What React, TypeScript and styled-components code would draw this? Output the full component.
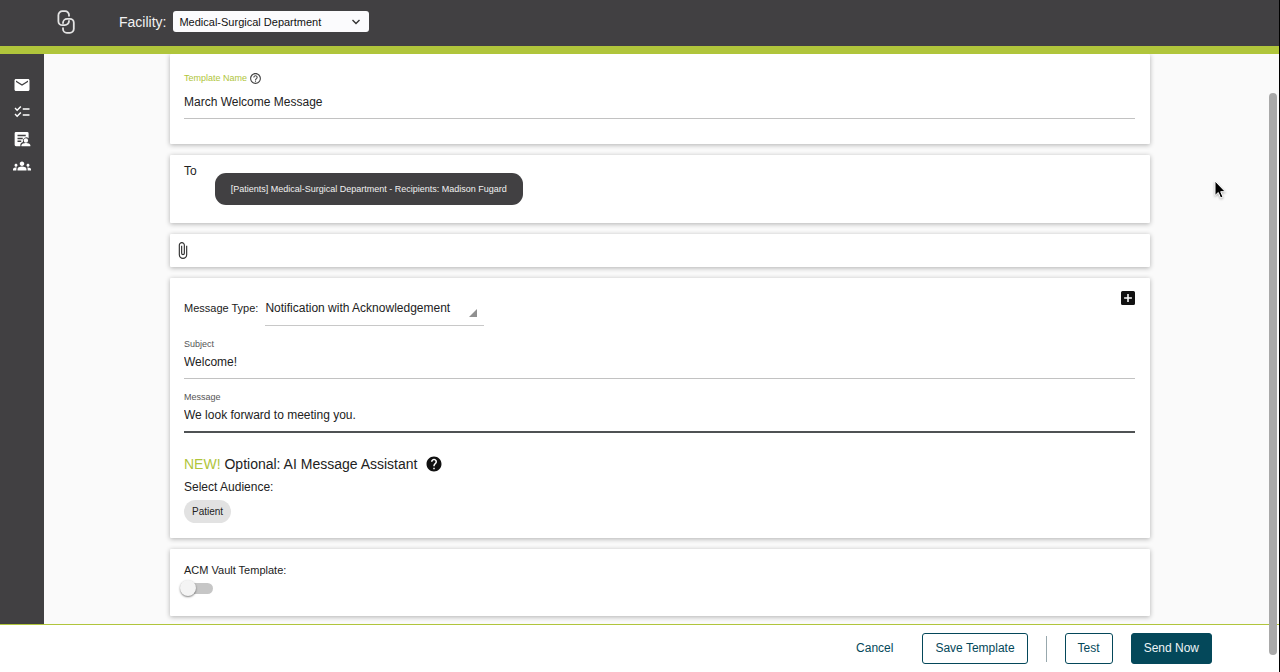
import React from "react";
import styled, { createGlobalStyle } from "styled-components";
import { MdEmail, MdChecklist, MdGroups, MdHelp, MdHelpOutline } from "react-icons/md";

const GlobalStyle = createGlobalStyle`
  * { box-sizing: border-box; }
  body { margin: 0; background: #fafafa; }
  body, button, input, select { font-family: "Liberation Sans", Arial, sans-serif; }
`;

const charcoal = "#414042";
const lime = "#b0c53b";
const teal = "#04485a";

const Frame = styled.div`
  position: relative;
  display: grid;
  grid-template-rows: auto 1fr auto;
  height: 100vh;
  overflow: hidden;
  border-right: 1px solid #000;
  color: #222;
  font-size: 12px;
`;

const TopBar = styled.header`
  display: flex;
  align-items: center;
  height: 54px;
  padding: 0 0 3px 57px;
  background: ${charcoal};
  border-bottom: 8px solid ${lime};
  color: #f2f2f2;
`;

const FacilityLabel = styled.label`
  margin: 0 7px 0 44px;
  font-size: 14px;
`;

const SelectWrap = styled.span`
  display: grid;
  align-items: center;
  > * { grid-area: 1 / 1; }
  > svg { justify-self: end; pointer-events: none; }
`;

const FacilitySelect = styled.select`
  appearance: none;
  width: 196px;
  height: 21px;
  padding: 0 24px 0 6px;
  border: 0;
  border-radius: 3px;
  background: #fbfbfd;
  color: #111;
  font-size: 11px;
`;

const Chevron = styled.svg`
  margin-right: 8px;
`;

const Body = styled.div`
  display: flex;
  min-height: 0;
`;

const SideBar = styled.nav`
  display: flex;
  flex-direction: column;
  align-items: center;
  gap: 9px;
  flex: none;
  width: 44px;
  padding-top: 22px;
  background: ${charcoal};
`;

const SideLink = styled.a`
  display: flex;
  color: #fff;
`;

const Main = styled.main`
  flex: 1;
  display: flex;
  flex-direction: column;
  align-items: center;
  gap: 11px;
  padding: 0 11px 0 8px;
  overflow: hidden;
  background: #fafafa;
`;

const Card = styled.section<{ $pad: string }>`
  flex: none;
  width: 100%;
  max-width: 980px;
  padding: ${(p) => p.$pad};
  background: #fff;
  border-radius: 1px;
  box-shadow: 0 1px 5px rgba(0, 0, 0, 0.3);
`;

const Field = styled.div<{ $gap?: number }>`
  display: flex;
  flex-direction: column;
  gap: ${(p) => p.$gap ?? 0}px;
`;

const FieldLabel = styled.label<{ $accent?: boolean }>`
  display: flex;
  align-items: center;
  gap: 2px;
  height: 14px;
  color: ${(p) => (p.$accent ? lime : "#555")};
  font-size: 9px;
  svg { color: #444; }
`;

const TextInput = styled.input<{ $focused?: boolean }>`
  width: 100%;
  padding: 0 0 5px;
  border: 0;
  border-bottom: ${(p) => (p.$focused ? "2px solid #4f5254" : "1px solid #c2c2c2")};
  border-radius: 0;
  outline: 0;
  background: transparent;
  color: #222;
  font-size: 12px;
  line-height: 22px;
  height: ${(p) => (p.$focused ? 29 : 28)}px;
`;

const RecipientRow = styled.div`
  display: flex;
  align-items: flex-start;
  gap: 18px;
  line-height: 18px;
`;

const RecipientPill = styled.button`
  height: 32px;
  margin-top: 11px;
  padding: 0 16px;
  border: 0;
  border-radius: 11px;
  background: ${charcoal};
  color: #f1f1f1;
  font-size: 9px;
`;

const IconButton = styled.button`
  display: flex;
  padding: 0;
  border: 0;
  background: none;
  color: #111;
`;

const MessageForm = styled.div`
  display: flex;
  flex-direction: column;
  gap: 11px;
`;

const TypeRow = styled.div`
  display: flex;
  align-items: flex-start;
  line-height: 34px;
  font-size: 11px;
`;

const TypeSelect = styled.select`
  appearance: none;
  width: 219px;
  height: 35px;
  padding: 0;
  border: 0;
  border-bottom: 1px solid #c8c8c8;
  border-radius: 0;
  background: transparent;
  color: #222;
  font-size: 12px;
`;

const Corner = styled.svg`
  margin: 8px 7px 0 0;
`;

const TypeLabel = styled.label`
  margin-right: 7px;
`;

const Push = styled.div`
  margin-left: auto;
`;

const AssistantTitle = styled.h2`
  display: flex;
  align-items: center;
  gap: 8px;
  margin: 21px 0 4px;
  font-size: 14px;
  font-weight: 400;
  line-height: 20px;
  mark { background: none; color: ${lime}; }
`;

const Caption = styled.div`
  margin-bottom: 4px;
  line-height: 18px;
`;

const Chip = styled.button`
  height: 23px;
  padding: 0 8px;
  border: 0;
  border-radius: 12px;
  background: #e2e2e2;
  color: #222;
  font-size: 10px;
`;

const SwitchLabel = styled.label`
  display: flex;
  flex-direction: column;
  align-items: flex-start;
  gap: 1px;
  font-size: 11px;
  line-height: 18px;
`;

const Switch = styled.input`
  appearance: none;
  display: grid;
  align-items: center;
  width: 33px;
  height: 16px;
  margin: 0 0 0 -4px;
  &::before,
  &::after {
    content: "";
    grid-area: 1 / 1;
  }
  &::before {
    height: 11px;
    margin-left: 4px;
    border-radius: 6px;
    background: #c6c6c6;
  }
  &::after {
    width: 16px;
    height: 16px;
    border-radius: 50%;
    background: #f4f4f4;
    box-shadow: 0 1px 2px rgba(0, 0, 0, 0.5);
  }
`;

const Footer = styled.footer`
  display: flex;
  justify-content: flex-end;
  align-items: center;
  gap: 18px;
  height: 48px;
  padding-right: 67px;
  background: #fff;
  border-top: 1px solid ${lime};
`;

const ActionButton = styled.button<{ $kind: "text" | "outline" | "solid" }>`
  height: 31px;
  padding: 0 ${(p) => (p.$kind === "text" ? 10 : 12)}px 1px;
  border: 1px solid ${(p) => (p.$kind === "text" ? "transparent" : teal)};
  border-radius: 3px;
  background: ${(p) => (p.$kind === "solid" ? teal : "transparent")};
  color: ${(p) => (p.$kind === "solid" ? "#eef5f7" : teal)};
  font-size: 12px;
`;

const Divider = styled.span`
  width: 1px;
  height: 26px;
  background: #98a8ad;
`;

const ScrollThumb = styled.div`
  position: absolute;
  top: 93px;
  right: 2px;
  bottom: 17px;
  width: 8px;
  border-radius: 4px;
  background: #a9a9a9;
`;

const Pointer = styled.svg`
  position: absolute;
  top: 180px;
  right: 53px;
  filter: drop-shadow(0 1px 1px rgba(0, 0, 0, 0.3));
`;

const Logo = () => (
  <svg width="18" height="24" viewBox="0 0 18 24" fill="none" stroke="#e4e4e4" strokeWidth="1.8" strokeLinecap="round" aria-label="Linked">
    <path d="M12 5.800V5A3.800 3.800 0 0 0 8.200 1.200H5.400A4 4 0 0 0 1.400 5.200V11.200A4 4 0 0 0 5.400 15.200H7.800A4.200 4.200 0 0 0 12 11" />
    <path d="M6 18.200V19A3.800 3.800 0 0 0 9.800 22.800H12.800A4 4 0 0 0 16.800 18.800V12.800A4 4 0 0 0 12.800 8.800H10.200A4.200 4.200 0 0 0 6 13" />
  </svg>
);

const RecordIcon = () => (
  <svg width="18" height="18" viewBox="0 0 24 24" fill="currentColor">
    <path
      fillRule="evenodd"
      d="M4 2.500h15a1.800 1.800 0 0 1 1.800 1.800v6.600a4.800 4.800 0 0 0-7.600 5c-1.800.8-3.200 2-3.400 3.500v2.100H4a1.800 1.800 0 0 1-1.800-1.800V4.300A1.800 1.800 0 0 1 4 2.500ZM6 6.300v2h11v-2ZM6 10.200v2h7v-2ZM6 14.100v2h5v-2Z"
    />
    <circle cx="17.200" cy="14" r="2.900" />
    <path d="M11.300 21.500v-1.300c0-2.100 3.900-3 5.900-3s5.900.9 5.900 3v1.300Z" />
  </svg>
);

export default function App() {
  return (
    <>
      <GlobalStyle />
      <Frame>
        <TopBar>
          <Logo />
          <FacilityLabel htmlFor="facility">Facility:</FacilityLabel>
          <SelectWrap>
            <FacilitySelect id="facility">
              <option>Medical-Surgical Department</option>
            </FacilitySelect>
            <Chevron width="10" height="6" viewBox="0 0 10 6" fill="none" stroke="#333" strokeWidth="1.4">
              <path d="M1.500 1L5 4.500L8.500 1" />
            </Chevron>
          </SelectWrap>
        </TopBar>

        <Body>
          <SideBar>
            <SideLink href="#messages" aria-label="Messages"><MdEmail size={18} /></SideLink>
            <SideLink href="#tasks" aria-label="Tasks"><MdChecklist size={18} /></SideLink>
            <SideLink href="#records" aria-label="Records"><RecordIcon /></SideLink>
            <SideLink href="#groups" aria-label="Groups"><MdGroups size={18} /></SideLink>
          </SideBar>

          <Main>
            <Card $pad="17px 15px 25px 14px">
              <Field $gap={6}>
                <FieldLabel htmlFor="name" $accent>
                  Template Name <MdHelpOutline size={13} />
                </FieldLabel>
                <TextInput id="name" defaultValue="March Welcome Message" />
              </Field>
            </Card>

            <Card $pad="7px 15px 18px 14px">
              <RecipientRow>
                <span>To</span>
                <RecipientPill>
                  [Patients] Medical-Surgical Department - Recipients: Madison Fugard
                </RecipientPill>
              </RecipientRow>
            </Card>

            <Card $pad="8px">
              <IconButton aria-label="Attach file">
                <svg width="10" height="17" viewBox="6.500 1 12 22" fill="#333">
                  <path d="M16.500 6v11.500c0 2.210-1.790 4-4 4s-4-1.790-4-4V5a2.500 2.500 0 0 1 5 0v10.500c0 .55-.45 1-1 1s-1-.45-1-1V6H10v9.500a2.500 2.500 0 0 0 5 0V5c0-2.210-1.790-4-4-4S7 2.790 7 5v12.500c0 3.040 2.460 5.500 5.500 5.500s5.500-2.460 5.500-5.500V6h-1.500z" />
                </svg>
              </IconButton>
            </Card>

            <Card $pad="13px 15px 15px 14px">
              <MessageForm>
                <TypeRow>
                  <TypeLabel htmlFor="type">Message Type:</TypeLabel>
                  <SelectWrap>
                    <TypeSelect id="type">
                      <option>Notification with Acknowledgement</option>
                    </TypeSelect>
                    <Corner width="8" height="8" viewBox="0 0 8 8" fill="#909090">
                      <path d="M8 0V8H0Z" />
                    </Corner>
                  </SelectWrap>
                  <Push>
                    <IconButton aria-label="Add">
                      <svg width="14" height="14" viewBox="3 3 18 18" fill="currentColor">
                        <path d="M19 3H5a2 2 0 0 0-2 2v14a2 2 0 0 0 2 2h14a2 2 0 0 0 2-2V5a2 2 0 0 0-2-2zm-2 10h-4v4h-2v-4H7v-2h4V7h2v4h4v2z" />
                      </svg>
                    </IconButton>
                  </Push>
                </TypeRow>
                <Field>
                  <FieldLabel htmlFor="subject">Subject</FieldLabel>
                  <TextInput id="subject" defaultValue="Welcome!" />
                </Field>
                <Field>
                  <FieldLabel htmlFor="message">Message</FieldLabel>
                  <TextInput id="message" defaultValue="We look forward to meeting you." $focused />
                </Field>
              </MessageForm>
              <AssistantTitle>
                <span><mark>NEW!</mark> Optional: AI Message Assistant</span>
                <MdHelp size={18} color="#111" />
              </AssistantTitle>
              <Caption>Select Audience:</Caption>
              <Chip>Patient</Chip>
            </Card>

            <Card $pad="12px 15px 20px 14px">
              <SwitchLabel>
                ACM Vault Template:
                <Switch type="checkbox" />
              </SwitchLabel>
            </Card>
          </Main>
        </Body>

        <Footer>
          <ActionButton $kind="text">Cancel</ActionButton>
          <ActionButton $kind="outline">Save Template</ActionButton>
          <Divider />
          <ActionButton $kind="outline">Test</ActionButton>
          <ActionButton $kind="solid">Send Now</ActionButton>
        </Footer>

        <ScrollThumb />
        <Pointer width="12" height="20" viewBox="0 0 12 20" stroke="#fff" strokeWidth="1">
          <path d="M1 1V15.500L4.300 12.500L6.600 18L9 17L6.700 11.700H11.300Z" />
        </Pointer>
      </Frame>
    </>
  );
}
